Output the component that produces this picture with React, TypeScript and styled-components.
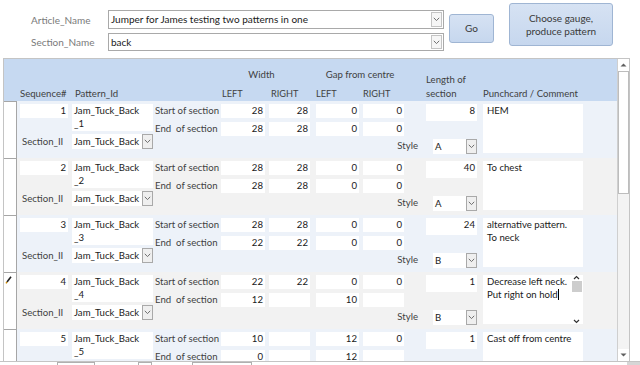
import React from "react";
import styled, { createGlobalStyle } from "styled-components";

const Global = createGlobalStyle`
  html, body { margin: 0; padding: 0; background: #fff; overflow: hidden; }
  body { font-family: Lato, "Open Sans", "Noto Sans", sans-serif; font-size: 9.6px; color: #1f1f1f; }
  * { box-sizing: border-box; }
`;

const Page = styled.div`
  width: 640px;
  height: 365px;
  overflow: hidden;
  background: #fff;
  display: flex;
  flex-direction: column;
`;

const TopArea = styled.div`
  height: 58px;
  flex-shrink: 0;
  display: flex;
  align-items: flex-start;
  padding-left: 31px;
`;

const FieldsGrid = styled.div`
  margin-top: 10px;
  display: grid;
  grid-template-columns: 77px 336px;
  grid-template-rows: 19px 18px;
  row-gap: 4px;
`;

const TopLabel = styled.div`
  color: #7a7a7a;
  line-height: 16px;
  align-self: center;
  font-size: 10px;
`;

const TopCombo = styled.div`
  border: 1px solid #a9a9a9;
  background: #fff;
  display: flex;
  align-items: stretch;
`;

const TopComboText = styled.div`
  flex: 1;
  padding-left: 2px;
  line-height: 16px;
  color: #1a1a1a;
  font-size: 10px;
`;

const TopDrop = styled.div`
  width: 11px;
  margin: 1px 1px 1px 0;
  border: 1px solid #c4c4c4;
  background: #f6f6f6;
  display: flex;
  align-items: center;
  justify-content: center;
`;

const Button = styled.div<{ $w: number; $h: number; $ml: number; $mt: number }>`
  width: ${(p) => p.$w}px;
  height: ${(p) => p.$h}px;
  margin-left: ${(p) => p.$ml}px;
  margin-top: ${(p) => p.$mt}px;
  border: 1px solid #9fb5d3;
  border-radius: 3px;
  background: linear-gradient(#d6e2f3, #c6d7ee);
  color: #3a3a3a;
  display: flex;
  align-items: center;
  justify-content: center;
  text-align: center;
  line-height: 13px;
  font-size: 10px;
`;

const Subform = styled.div`
  margin-left: 3px;
  width: 627px;
  height: 303px;
  flex-shrink: 0;
  border: 1px solid #c4c4c4;
  border-bottom: none;
  display: flex;
`;

const Content = styled.div`
  flex: 1;
  display: flex;
  flex-direction: column;
  overflow: hidden;
`;

const HeaderBand = styled.div`
  height: 42px;
  flex-shrink: 0;
  background: #c6d9f1;
  display: flex;
  padding-left: 16px;
  color: #3f3f3f;
`;

const HeadCol = styled.div<{ $w: number; $ml?: number; $pl?: number }>`
  width: ${(p) => p.$w}px;
  margin-left: ${(p) => p.$ml ?? 0}px;
  padding-left: ${(p) => p.$pl ?? 0}px;
  display: flex;
  flex-direction: column;
  justify-content: flex-end;
  line-height: 14px;
  white-space: nowrap;
`;

const HeadTop = styled.div<{ $shift?: number }>`
  margin-top: 9px;
  text-align: center;
  padding-right: ${(p) => p.$shift ?? 0}px;
`;

const HeadSub = styled.div`
  margin-top: auto;
  display: flex;
`;

const HeadSubCell = styled.div<{ $w: number; $ml?: number; $pl?: number }>`
  width: ${(p) => p.$w}px;
  margin-left: ${(p) => p.$ml ?? 0}px;
  padding-left: ${(p) => p.$pl ?? 0}px;
  font-size: 9.2px;
`;

const Records = styled.div`
  flex: 1;
  overflow: hidden;
  display: flex;
  flex-direction: column;
`;

const Record = styled.div<{ $alt: boolean }>`
  height: 57px;
  flex-shrink: 0;
  display: flex;
  align-items: flex-start;
  background: ${(p) => (p.$alt ? "#f2f2f2" : "#edf2f9")};
`;

const Selector = styled.div`
  width: 13px;
  height: 100%;
  flex-shrink: 0;
  background: #fff;
  border-right: 1px solid #a6a6a6;
  border-top: 1px solid #a6a6a6;
  padding: 2px 0 0 1px;
`;

const LeftBlock = styled.div`
  margin-left: 3px;
  padding-top: 3px;
  display: grid;
  grid-template-columns: 48px 81px;
  grid-template-rows: 27px 15px;
  column-gap: 4px;
  row-gap: 3px;
`;

const Field = styled.div<{ $w: number; $h?: number; $ml?: number; $left?: boolean }>`
  width: ${(p) => p.$w}px;
  height: ${(p) => p.$h ?? 14}px;
  margin-left: ${(p) => p.$ml ?? 0}px;
  flex-shrink: 0;
  background: #fff;
  color: #1a1a1a;
  text-align: ${(p) => (p.$left ? "left" : "right")};
  padding: ${(p) => (p.$left ? "0 0 0 2px" : "0 2px 0 0")};
  line-height: 13px;
  white-space: pre;
`;

const RowLabel = styled.div<{ $w?: number }>`
  width: ${(p) => (p.$w ? `${p.$w}px` : "auto")};
  flex-shrink: 0;
  color: #3f3f3f;
  line-height: 13px;
  white-space: pre;
`;

const SectionLabel = styled.div`
  padding-left: 2px;
  color: #3f3f3f;
  line-height: 15px;
`;

const Combo = styled.div<{ $w: number }>`
  width: ${(p) => p.$w}px;
  height: 15px;
  display: flex;
  background: #fff;
`;

const ComboText = styled.div`
  flex: 1;
  padding-left: 2px;
  line-height: 15px;
  color: #1a1a1a;
  white-space: nowrap;
  overflow: hidden;
`;

const DropBtn = styled.div`
  width: 11px;
  height: 15px;
  border: 1px solid #a9a9a9;
  background: #efefef;
  display: flex;
  align-items: center;
  justify-content: center;
`;

const MidBlock = styled.div`
  margin-left: 2px;
  padding-top: 3px;
  width: 322px;
  display: flex;
  flex-direction: column;
`;

const Row = styled.div<{ $mt?: number; $end?: boolean }>`
  display: flex;
  align-items: flex-start;
  margin-top: ${(p) => p.$mt ?? 0}px;
  justify-content: ${(p) => (p.$end ? "flex-end" : "flex-start")};
`;

const StyleLabel = styled.div`
  color: #3f3f3f;
  line-height: 13px;
  margin-right: 15px;
`;

const Comment = styled.div`
  margin-left: 6px;
  margin-top: 3px;
  width: 100px;
  height: 49px;
  background: #fff;
  color: #1a1a1a;
  padding: 0 0 0 4px;
  line-height: 13px;
  white-space: pre-wrap;
  display: flex;
`;

const CommentText = styled.div`
  flex: 1;
`;

const Caret = styled.span`
  display: inline-block;
  width: 1px;
  height: 11px;
  background: #000;
  vertical-align: -2px;
`;

const MiniScroll = styled.div`
  width: 11px;
  margin-right: 1px;
  display: flex;
  flex-direction: column;
  align-items: center;
`;

const MiniThumb = styled.div`
  width: 10px;
  height: 11px;
  background: #cdcdcd;
  margin-top: 1px;
`;

const VScroll = styled.div`
  width: 12px;
  flex-shrink: 0;
  border-left: 1px solid #cfcfcf;
  background: #f3f3f3;
  display: flex;
  flex-direction: column;
`;

const ScrollBtn = styled.div`
  height: 12px;
  background: #fff;
  display: flex;
  align-items: center;
  justify-content: center;
`;

const Thumb = styled.div`
  height: 123px;
  background: #fff;
  border: 1px solid #bdbdbd;
`;

const Track = styled.div`
  flex: 1;
`;

const NavBar = styled.div`
  height: 4px;
  flex-shrink: 0;
  border-top: 1px solid #c4c4c4;
  display: flex;
`;

const NavBox = styled.div<{ $w: number; $ml: number }>`
  width: ${(p) => p.$w}px;
  margin-left: ${(p) => p.$ml}px;
  border: 1px solid #b0b0b0;
  border-bottom: none;
  background: #fff;
`;

const NavCorner = styled.div`
  margin-left: auto;
  width: 13px;
  background: #d6d6d6;
`;

const Chevron = () => (
  <svg width="7" height="5" viewBox="0 0 7 5">
    <path d="M0.8 0.8 L3.5 3.6 L6.2 0.8" fill="none" stroke="#707070" strokeWidth="1" />
  </svg>
);

const Arrow = ({ up, color = "#606060" }: { up?: boolean; color?: string }) => (
  <svg width="7" height="4" viewBox="0 0 7 4">
    {up ? <path d="M0.5 3.5 L3.5 0.5 L6.5 3.5 Z" fill={color} /> : <path d="M0.5 0.5 L3.5 3.5 L6.5 0.5 Z" fill={color} />}
  </svg>
);

const Caretline = ({ up }: { up?: boolean }) => (
  <svg width="7" height="5" viewBox="0 0 7 5">
    <path d={up ? "M1 4 L3.5 1.5 L6 4" : "M1 1 L3.5 3.5 L6 1"} fill="none" stroke="#333" strokeWidth="1.2" />
  </svg>
);

const Pencil = () => (
  <svg width="7" height="8" viewBox="0 0 7 8">
    <path d="M6 0.8 L2 6" stroke="#222" strokeWidth="1.6" />
    <path d="M2 6 L1 7.4" stroke="#d08c00" strokeWidth="1.4" />
  </svg>
);

type Rec = {
  seq: number;
  r1: string[];
  len: string;
  r2: string[];
  style: string;
  comment: string;
  edit?: boolean;
};

const records: Rec[] = [
  { seq: 1, r1: ["28", "28", "0", "0"], len: "8", r2: ["28", "28", "0", "0"], style: "A", comment: "HEM" },
  { seq: 2, r1: ["28", "28", "0", "0"], len: "40", r2: ["28", "28", "0", "0"], style: "A", comment: "To chest" },
  { seq: 3, r1: ["28", "28", "0", "0"], len: "24", r2: ["22", "22", "0", "0"], style: "B", comment: "alternative pattern.\nTo neck" },
  { seq: 4, r1: ["22", "22", "0", "0"], len: "1", r2: ["12", "", "10", ""], style: "B", comment: "Decrease left neck.\nPut right on hold", edit: true },
  { seq: 5, r1: ["10", "", "12", "0"], len: "1", r2: ["0", "", "12", ""], style: "B", comment: "Cast off from centre" },
];

const ValueRow = ({ label, vals, len, mt }: { label: string; vals: string[]; len?: string; mt?: number }) => (
  <Row $mt={mt}>
    <RowLabel $w={66}>{label}</RowLabel>
    <Field $w={44}>{vals[0]}</Field>
    <Field $w={41} $ml={4}>{vals[1]}</Field>
    <Field $w={43} $ml={6}>{vals[2]}</Field>
    <Field $w={41} $ml={4}>{vals[3]}</Field>
    {len !== undefined && (
      <Field $w={51} $h={17} $ml={22}>
        {len}
      </Field>
    )}
  </Row>
);

const RecordView = ({ r, alt }: { r: Rec; alt: boolean }) => (
  <Record $alt={alt}>
    <Selector>{r.edit && <Pencil />}</Selector>
    <LeftBlock>
      <Field $w={48}>{r.seq}</Field>
      <Field $w={81} $h={27} $left>
        {`Jam_Tuck_Back\n_${r.seq}`}
      </Field>
      <SectionLabel>Section_II</SectionLabel>
      <Combo $w={81}>
        <ComboText>Jam_Tuck_Back</ComboText>
        <DropBtn>
          <Chevron />
        </DropBtn>
      </Combo>
    </LeftBlock>
    <MidBlock>
      <ValueRow label="Start of section" vals={r.r1} len={r.len} />
      <ValueRow label="End  of section" vals={r.r2} mt={1} />
      <Row $mt={3} $end>
        <StyleLabel>Style</StyleLabel>
        <Combo $w={44}>
          <ComboText>{r.style}</ComboText>
          <DropBtn>
            <Chevron />
          </DropBtn>
        </Combo>
      </Row>
    </MidBlock>
    <Comment>
      <CommentText>
        {r.comment}
        {r.edit && <Caret />}
      </CommentText>
      {r.edit && (
        <MiniScroll>
          <Caretline up />
          <MiniThumb />
          <div style={{ flex: 1 }} />
          <Caretline />
        </MiniScroll>
      )}
    </Comment>
  </Record>
);

export default function App() {
  return (
    <Page>
      <Global />
      <TopArea>
        <FieldsGrid>
          <TopLabel>Article_Name</TopLabel>
          <TopCombo>
            <TopComboText>Jumper for James testing two patterns in one</TopComboText>
            <TopDrop>
              <Chevron />
            </TopDrop>
          </TopCombo>
          <TopLabel>Section_Name</TopLabel>
          <TopCombo>
            <TopComboText>back</TopComboText>
            <TopDrop>
              <Chevron />
            </TopDrop>
          </TopCombo>
        </FieldsGrid>
        <Button $w={45} $h={29} $ml={5} $mt={14}>
          Go
        </Button>
        <Button $w={104} $h={43} $ml={15} $mt={3}>
          Choose gauge,
          <br />
          produce pattern
        </Button>
      </TopArea>
      <Subform>
        <Content>
          <HeaderBand>
            <HeadCol $w={48}>Sequence#</HeadCol>
            <HeadCol $w={81} $ml={4} $pl={3}>
              Pattern_Id
            </HeadCol>
            <HeadCol $w={89} $ml={68}>
              <HeadTop $shift={8}>Width</HeadTop>
              <HeadSub>
                <HeadSubCell $w={44} $pl={1}>LEFT</HeadSubCell>
                <HeadSubCell $w={41} $ml={4} $pl={2}>RIGHT</HeadSubCell>
              </HeadSub>
            </HeadCol>
            <HeadCol $w={88} $ml={6}>
              <HeadTop>Gap from centre</HeadTop>
              <HeadSub>
                <HeadSubCell $w={43}>LEFT</HeadSubCell>
                <HeadSubCell $w={41} $ml={4}>RIGHT</HeadSubCell>
              </HeadSub>
            </HeadCol>
            <HeadCol $w={51} $ml={22}>
              <div>Length of</div>
              <div>section</div>
            </HeadCol>
            <HeadCol $w={100} $ml={6}>
              Punchcard / Comment
            </HeadCol>
          </HeaderBand>
          <Records>
            {records.map((r, i) => (
              <RecordView key={r.seq} r={r} alt={i % 2 === 1} />
            ))}
          </Records>
        </Content>
        <VScroll>
          <ScrollBtn>
            <Arrow up />
          </ScrollBtn>
          <Thumb />
          <Track />
          <ScrollBtn>
            <Arrow />
          </ScrollBtn>
        </VScroll>
      </Subform>
      <NavBar>
        <NavBox $w={38} $ml={57} />
        <NavBox $w={14} $ml={43} />
        <NavBox $w={60} $ml={40} />
        <NavCorner />
      </NavBar>
    </Page>
  );
}
